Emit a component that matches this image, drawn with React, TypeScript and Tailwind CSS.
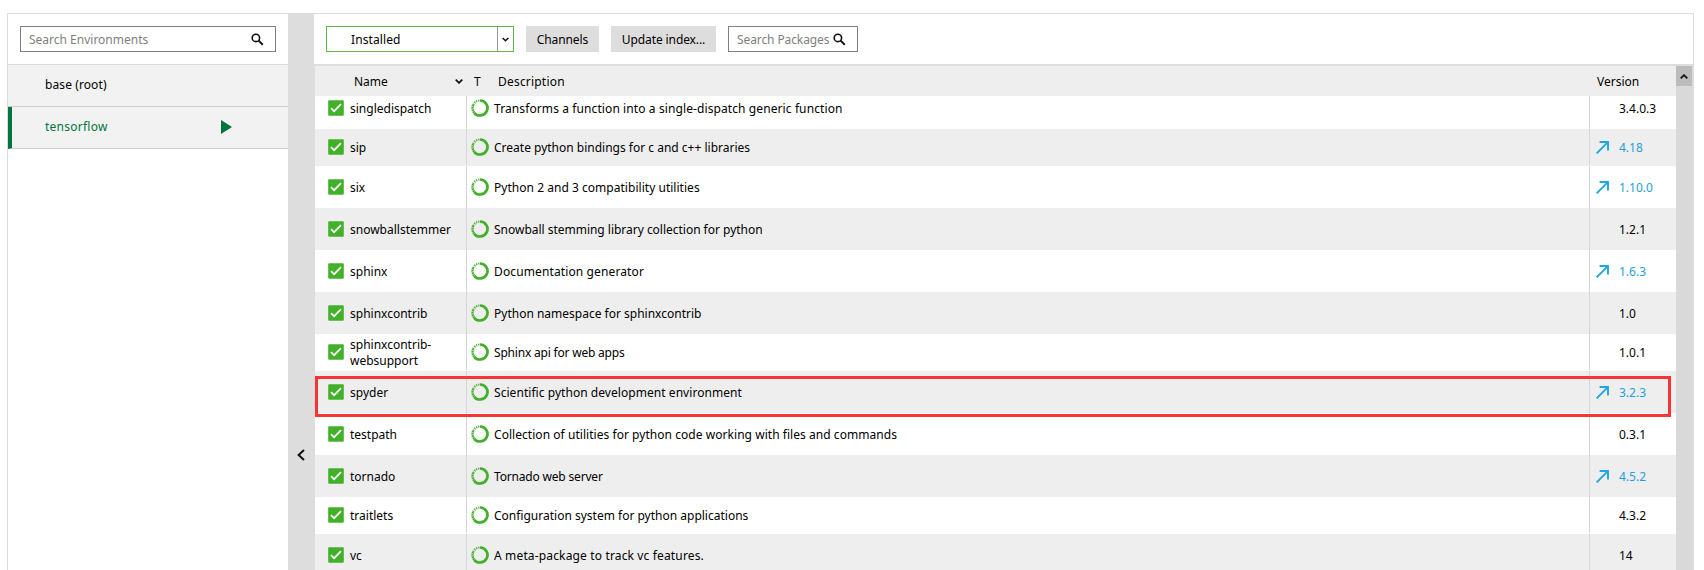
import React from "react";

type Pkg = {
  name: string;
  desc: string;
  version: string;
  update?: boolean;
  height: string;
  tracking?: string;
};

const packages: Pkg[] = [
  { name: "singledispatch", desc: "Transforms a function into a single-dispatch generic function", version: "3.4.0.3", height: "h-[42px] -mt-[9px]", tracking: "tracking-[0.1px]" },
  { name: "sip", desc: "Create python bindings for c and c++ libraries", version: "4.18", update: true, height: "h-[37px] pb-px" },
  { name: "six", desc: "Python 2 and 3 compatibility utilities", version: "1.10.0", update: true, height: "h-[42px]", tracking: "tracking-[0.03px]" },
  { name: "snowballstemmer", desc: "Snowball stemming library collection for python", version: "1.2.1", height: "h-[42px]", tracking: "tracking-[-0.02px]" },
  { name: "sphinx", desc: "Documentation generator", version: "1.6.3", update: true, height: "h-[42px]", tracking: "tracking-[0.12px]" },
  { name: "sphinxcontrib", desc: "Python namespace for sphinxcontrib", version: "1.0", height: "h-[42px]" },
  { name: "sphinxcontrib-websupport", desc: "Sphinx api for web apps", version: "1.0.1", height: "h-[37px] pb-px", tracking: "tracking-[-0.2px]" },
  { name: "spyder", desc: "Scientific python development environment", version: "3.2.3", update: true, height: "h-[42px]", tracking: "tracking-[0.05px]" },
  { name: "testpath", desc: "Collection of utilities for python code working with files and commands", version: "0.3.1", height: "h-[42px]", tracking: "tracking-[0.045px]" },
  { name: "tornado", desc: "Tornado web server", version: "4.5.2", update: true, height: "h-[42px]", tracking: "tracking-[-0.18px]" },
  { name: "traitlets", desc: "Configuration system for python applications", version: "4.3.2", height: "h-[37px] pb-px" },
  { name: "vc", desc: "A meta-package to track vc features.", version: "14", height: "h-[42px]", tracking: "tracking-[0.15px]" },
];

function SearchIcon() {
  return (
    <svg width="13" height="13" viewBox="0 0 13 13" fill="none" stroke="#111" className="shrink-0">
      <circle cx="4.9" cy="4.9" r="3.7" strokeWidth="1.6" />
      <path d="M7.6 7.6L11.8 11.8" strokeWidth="2" />
    </svg>
  );
}

function Chevron({ className }: { className: string }) {
  return (
    <svg width="8" height="5" viewBox="0 0 8 5" fill="none" stroke="#111" strokeWidth="1.7" className={className}>
      <path d="M0.7 0.7L4 3.9L7.3 0.7" />
    </svg>
  );
}

function CheckIcon() {
  return (
    <svg width="16" height="16" viewBox="0 0 16 16" className="shrink-0">
      <rect x="0.2" y="0.2" width="15.6" height="15.6" rx="1" fill="#43b02a" />
      <path d="M3 8.1L6.1 11.2L13 4.2" fill="none" stroke="#fff" strokeWidth="1.7" />
    </svg>
  );
}

function RingIcon() {
  return (
    <svg width="18" height="18" viewBox="0 0 18 18" fill="none" stroke="#43b02a" className="shrink-0">
      <path d="M9 1.5A7.5 7.5 0 1 1 3.2 13.8" strokeWidth="2.7" />
      <path d="M3.2 13.8A7.5 7.5 0 0 1 2.2 6" strokeWidth="2.4" strokeDasharray="1.7 0.5" />
      <path d="M2.2 6A7.5 7.5 0 0 1 9 1.5" strokeWidth="2.2" strokeDasharray="1.3 0.9" strokeOpacity="0.9" />
    </svg>
  );
}

function ArrowIcon() {
  return (
    <svg width="13" height="13" viewBox="0 0 13 13" fill="none" stroke="#1ea7e4" strokeWidth="1.9" className="shrink-0">
      <path d="M0.6 12.4L11.6 1.4M3.6 1H12V9.4" />
    </svg>
  );
}

function Row({ pkg, odd }: { pkg: Pkg; odd: boolean }) {
  return (
    <div className={`flex shrink-0 ${pkg.height} ${odd ? "bg-[#eeeeee]" : "bg-white"}`}>
      <div className="flex w-[152px] items-center border-r border-[#d5d5d5] pl-[13px]">
        <CheckIcon />
        <span className="ml-1.5 mt-0.5 w-[105px] leading-4">{pkg.name}</span>
      </div>
      <div className="flex flex-1 items-center border-r border-[#d5d5d5] pl-1">
        <RingIcon />
        <span className={`ml-[5px] mt-0.5 whitespace-nowrap leading-4 ${pkg.tracking ?? ""}`}>{pkg.desc}</span>
      </div>
      <div className={`flex w-[86px] items-center pl-1.5 ${pkg.update ? "text-[#1ea0db]" : ""}`}>
        <div className="w-[23px]">{pkg.update && <ArrowIcon />}</div>
        <span className="mt-0.5 leading-4">{pkg.version}</span>
      </div>
    </div>
  );
}

function Sidebar() {
  return (
    <aside className="w-[280px] shrink-0 bg-white">
      <div className="h-[51px] border-b border-[#dcdcdc] px-3 pt-3">
        <div className="flex h-[26px] items-center justify-between border border-[#808080] pl-2 pr-[11px] text-[#808080]">
          <span className="mt-0.5 leading-4">Search Environments</span>
          <SearchIcon />
        </div>
      </div>
      <div className="flex h-[42px] items-center border-b border-[#cccccc] bg-[#f2f2f2] pb-px pl-[37px] tracking-[0.1px]">base (root)</div>
      <div className="flex h-[42px] items-center border-b border-l-4 border-b-[#cccccc] border-l-[#00753f] bg-[#f2f2f2] pb-px pl-[33px] text-[#00753f]">
        <span className="w-44 tracking-[0.25px]">tensorflow</span>
        <svg width="11" height="14" viewBox="0 0 11 14">
          <path d="M0 0L11 7L0 14Z" fill="#00753f" />
        </svg>
      </div>
    </aside>
  );
}

function Toolbar() {
  return (
    <div className="flex h-[52px] shrink-0 items-start border-b-2 border-[#dddddd] pl-3 pt-3">
      <div className="flex h-[26px] w-[188px] border border-[#5cb847]">
        <span className="mt-[5px] flex-1 pl-6 leading-4 tracking-[0.1px]">Installed</span>
        <div className="flex w-4 items-center justify-center border-l border-[#999999]">
          <Chevron className="w-[7px]" />
        </div>
      </div>
      <button className="ml-3 h-[26px] w-[73px] bg-[#dddddd] pt-0.5 leading-4 tracking-[-0.1px]">Channels</button>
      <button className="ml-3 h-[26px] w-[105px] bg-[#dddddd] pt-0.5 leading-4 tracking-[-0.1px]">Update index...</button>
      <div className="ml-3 flex h-[26px] w-[130px] items-center justify-between border border-[#808080] pl-2 pr-[11px] text-[#808080]">
        <span className="mt-0.5 whitespace-nowrap leading-4 tracking-[-0.1px]">Search Packages</span>
        <SearchIcon />
      </div>
    </div>
  );
}

export default function App() {
  return (
    <div className="h-[570px] w-[1704px] overflow-hidden bg-white pl-[7px] pt-[13px] font-['Noto_Sans','Open_Sans',sans-serif] text-[12px] text-black">
      <div className="flex h-[557px] w-[1687px] border-x border-t border-[#dcdcdc]">
        <Sidebar />
        <div className="flex w-[26px] shrink-0 justify-center bg-[#dddddd] pt-[435px]">
          <svg width="8" height="12" viewBox="0 0 8 12" fill="none" stroke="#111" strokeWidth="2">
            <path d="M7 0.9L1.6 6L7 11.1" />
          </svg>
        </div>
        <main className="flex min-w-0 flex-1 flex-col">
          <Toolbar />
          <div className="flex min-h-0 flex-1 border-l border-[#dddddd]">
            <div className="relative flex flex-1 flex-col">
              <div className="z-10 flex h-[30px] shrink-0 items-center bg-[#eeeeee] pt-0.5">
                <div className="flex w-[159px] items-center justify-between pl-[39px] pr-[11px]">
                  <span>Name</span>
                  <Chevron className="-mt-0.5" />
                </div>
                <span className="w-6">T</span>
                <span className="flex-1 tracking-[0.2px]">Description</span>
                <span className="w-[79px]">Version</span>
              </div>
              <div className="flex min-h-0 flex-1 flex-col overflow-hidden">
                {packages.map((p, i) => (
                  <Row key={p.name} pkg={p} odd={i % 2 === 1} />
                ))}
              </div>
              <div className="absolute left-0 top-[310px] h-[41px] w-[1356px] border-[3px] border-[#fa3434]" />
            </div>
            <div className="w-[17px] shrink-0 border-r border-[#dddddd] bg-[#d9d9d9]">
              <div className="flex h-5 items-center justify-center bg-[#bcbcbc]">
                <Chevron className="rotate-180" />
              </div>
            </div>
          </div>
        </main>
      </div>
    </div>
  );
}
